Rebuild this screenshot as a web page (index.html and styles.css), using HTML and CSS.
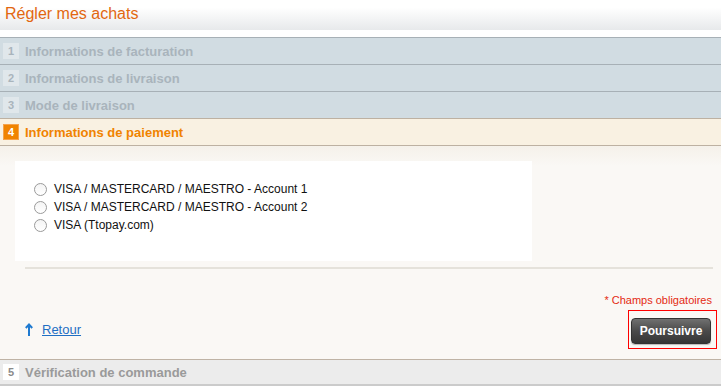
FILE: index.html
```html
<!DOCTYPE html>
<html lang="fr">
<head>
  <meta charset="UTF-8">
  <title>Régler mes achats</title>
  <link rel="stylesheet" href="styles.css">
</head>
<body>
  <header class="page-header">
    <h1>Régler mes achats</h1>
  </header>

  <div class="steps">
    <div class="step done"><span class="num">1</span>Informations de facturation</div>
    <div class="step done"><span class="num">2</span>Informations de livraison</div>
    <div class="step done"><span class="num">3</span>Mode de livraison</div>
    <div class="step active"><span class="num">4</span>Informations de paiement</div>

    <div class="step-body">
      <div class="panel">
        <label class="option"><span class="radio"></span>VISA / MASTERCARD / MAESTRO - Account 1</label>
        <label class="option"><span class="radio"></span>VISA / MASTERCARD / MAESTRO - Account 2</label>
        <label class="option"><span class="radio"></span>VISA (Ttopay.com)</label>
      </div>
      <div class="divider"></div>
      <p class="required">* Champs obligatoires</p>
      <div class="actions">
        <a class="back" href="#">
          <svg width="8" height="13" viewBox="0 0 8 13"><path d="M4 1.5V13M0.8 5L4 1.5L7.2 5" fill="none" stroke="#1f7ad0" stroke-width="2"/></svg>
          <span>Retour</span>
        </a>
        <div class="submit-box">
          <button class="btn-next">Poursuivre</button>
        </div>
      </div>
    </div>

    <div class="step todo"><span class="num">5</span>Vérification de commande</div>
  </div>
</body>
</html>
```

FILE: styles.css
```css
:root {
  --orange: #f08300;
  --title-color: #e2670f;
  --step-grey: #a9b4bc;
  --link-blue: #1f6fc4;
}
body {
  margin: 0;
  font-family: "Liberation Sans", Arial, sans-serif;
  background: #fff;
  color: #222;
}
.page-header {
  height: 30px;
  background: linear-gradient(#fff 25%, #e7e9eb);
  margin-bottom: 7px;
}
.page-header h1 {
  margin: 0;
  padding: 4px 0 0 5px;
  font-size: 16px;
  font-weight: normal;
  color: var(--title-color);
  line-height: 20px;
}
.step {
  display: flex;
  align-items: center;
  height: 26px;
  border-top: 1px solid #a7b0b6;
  background: #d1dce2;
  color: var(--step-grey);
  font-size: 13px;
  font-weight: bold;
}
.step .num {
  width: 16px;
  height: 16px;
  margin: 0 6px 0 3px;
  background: #e0e7eb;
  font-size: 11px;
  line-height: 16px;
  text-align: center;
}
.step.active {
  background: #f9f1e2;
  border-top-color: #bdb1a2;
  border-bottom: 1px solid #bdb1a2;
  color: var(--orange);
}
.step.active .num {
  background: var(--orange);
  color: #fff;
  box-shadow: 0 0 0 1px #f6a24a inset;
}
.step.todo {
  height: 24px;
  background: #ececec;
  border-top-color: #bfb3a5;
  border-bottom: 2px solid #cbcbcb;
  color: #9a9a9a;
}
.step.todo .num {
  background: #fff;
  color: #8a8a8a;
}
.step-body {
  padding: 15px 4px 10px 15px;
  background: linear-gradient(#f5f1ea, #faf8f5 20px);
}
.panel {
  width: 517px;
  height: 100px;
  box-sizing: border-box;
  padding: 19px 0 0 19px;
  background: #fff;
}
.option {
  display: flex;
  align-items: center;
  height: 18px;
  font-size: 12px;
  color: #111;
}
.radio {
  width: 11px;
  height: 11px;
  margin-right: 7px;
  border: 1px solid #9a9a9a;
  border-radius: 50%;
  background: linear-gradient(#f4f4f4, #fff);
}
.divider {
  margin: 6px 4px 0 10px;
  height: 2px;
  background: #e5e2db;
}
.required {
  margin: 24px 5px 0 0;
  text-align: right;
  font-size: 11px;
  color: #e42a12;
  line-height: 14px;
}
.actions {
  display: flex;
  align-items: center;
  justify-content: space-between;
  margin-top: 3px;
}
.back {
  display: flex;
  align-items: center;
  gap: 9px;
  margin-left: 10px;
  font-size: 13px;
  color: var(--link-blue);
}
.back svg {
  margin-top: -1px;
}
.submit-box {
  padding: 7px 5px 4px 2px;
  border: 1px solid #ff0000;
}
.btn-next {
  display: block;
  width: 80px;
  height: 26px;
  border: 1px solid #333;
  border-radius: 4px;
  background: linear-gradient(#707070, #4a4a4a 50%, #363636);
  box-shadow: 0 1px 1px rgba(0,0,0,0.25);
  color: #fff;
  font-family: "Liberation Sans", Arial, sans-serif;
  font-size: 12px;
  font-weight: bold;
  cursor: pointer;
}
```
